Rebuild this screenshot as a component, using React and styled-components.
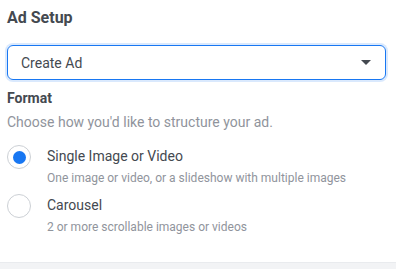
import React, { useState } from "react";
import styled, { createGlobalStyle } from "styled-components";

const Global = createGlobalStyle`
  html, body { margin: 0; padding: 0; background: #ffffff; }
  body { font-family: Roboto, "Liberation Sans", Arial, sans-serif; -webkit-font-smoothing: antialiased; }
  * { box-sizing: border-box; }
`;

const Page = styled.div`
  width: 396px;
  height: 269px;
  display: flex;
  flex-direction: column;
  background: #ffffff;
`;

const Panel = styled.section`
  flex: 1;
  padding: 8px 10px 0 7px;
  display: flex;
  flex-direction: column;
`;

const Title = styled.h2`
  margin: 0;
  font-size: 16px;
  line-height: 20px;
  font-weight: 700;
  color: #444950;
`;

const Select = styled.div`
  margin-top: 17px;
  height: 35px;
  flex: none;
  border: 1px solid #1877f2;
  border-radius: 6px;
  box-shadow: 0 0 0 2px rgba(24, 119, 242, 0.16);
  display: flex;
  align-items: center;
  justify-content: space-between;
  padding: 0 14px 0 13px;
  font-size: 14px;
  color: #444950;
`;

const Caret = styled.span`
  width: 0;
  height: 0;
  border-left: 5px solid transparent;
  border-right: 5px solid transparent;
  border-top: 5px solid #444950;
`;

const SectionLabel = styled.div`
  margin-top: 9px;
  font-size: 14px;
  line-height: 18px;
  font-weight: 700;
  color: #444950;
`;

const Hint = styled.div`
  margin-top: 6px;
  font-size: 14px;
  line-height: 18px;
  color: #90949c;
`;

const Options = styled.div`
  margin-top: 14px;
  display: flex;
  flex-direction: column;
  gap: 8px;
`;

const Option = styled.label`
  display: grid;
  grid-template-columns: 24px 1fr;
  column-gap: 16px;
  cursor: pointer;
`;

const Radio = styled.span`
  width: 24px;
  height: 24px;
  border-radius: 50%;
  border: 1px solid #ccd0d5;
  background: #fff;
  display: flex;
  align-items: center;
  justify-content: center;
  &::after {
    content: "";
    width: 13px;
    height: 13px;
    border-radius: 50%;
    background: ${(p) => (p.$checked ? "#1877f2" : "transparent")};
  }
`;

const OptionText = styled.div`
  display: flex;
  flex-direction: column;
  padding-top: 2px;
`;

const OptionTitle = styled.span`
  font-size: 14px;
  line-height: 18px;
  color: #444950;
`;

const OptionDesc = styled.span`
  margin-top: 5px;
  font-size: 12px;
  line-height: 16px;
  color: #90949c;
`;

const Footer = styled.div`
  height: 7px;
  background: #f2f3f5;
  border-top: 1px solid #e9ebee;
`;

const options = [
  { id: "single", title: "Single Image or Video", desc: "One image or video, or a slideshow with multiple images" },
  { id: "carousel", title: "Carousel", desc: "2 or more scrollable images or videos" },
];

export default function App() {
  const [sel, setSel] = useState("single");
  return (
    <Page>
      <Global />
      <Panel>
        <Title>Ad Setup</Title>
        <Select>
          <span>Create Ad</span>
          <Caret />
        </Select>
        <SectionLabel>Format</SectionLabel>
        <Hint>Choose how you'd like to structure your ad.</Hint>
        <Options>
          {options.map((o) => (
            <Option key={o.id} onClick={() => setSel(o.id)}>
              <Radio $checked={sel === o.id} />
              <OptionText>
                <OptionTitle>{o.title}</OptionTitle>
                <OptionDesc>{o.desc}</OptionDesc>
              </OptionText>
            </Option>
          ))}
        </Options>
      </Panel>
      <Footer />
    </Page>
  );
}
